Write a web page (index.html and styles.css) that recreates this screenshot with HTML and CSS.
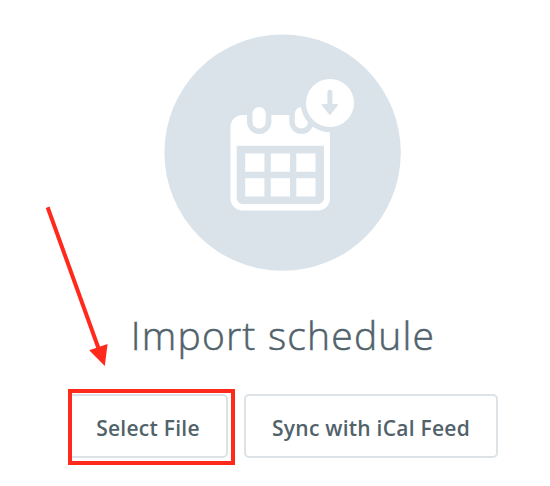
FILE: index.html
```html
<!DOCTYPE html>
<html lang="en">
<head>
  <meta charset="UTF-8">
  <meta name="viewport" content="width=device-width, initial-scale=1.0">
  <title>Import schedule</title>
  <link rel="stylesheet" href="styles.css">
</head>
<body>
  <div class="import">
    <svg class="import-icon" viewBox="0 0 238 238" aria-hidden="true">
      <circle class="tint" cx="118.6" cy="118.6" r="118.2"/>
      <!-- calendar -->
      <rect class="paper" x="66.5" y="81" width="99.5" height="95.5" rx="12"/>
      <path class="tint" d="M72.7 111.8H160V164a6 6 0 0 1-6 6H78.7a6 6 0 0 1-6-6z"/>
      <path class="paper" d="M81.2 119.5h19.2v18.3H81.2zM106.8 119.5H126v18.3h-19.2zM132.3 119.5h19.2v18.3h-19.2zM81.2 144.2h19.2v18.3H81.2zM106.8 144.2H126v18.3h-19.2zM132.3 144.2h19.2v18.3h-19.2z"/>
      <!-- rings -->
      <path class="tint" d="M83 80h24.4v7.8a12.2 12.2 0 0 1-24.4 0zM125.3 80h24.4v7.8a12.2 12.2 0 0 1-24.4 0z"/>
      <rect class="paper" x="88.5" y="73" width="13.2" height="21.5" rx="6.6"/>
      <rect class="paper" x="130.8" y="73" width="13.2" height="21.5" rx="6.6"/>
      <!-- download badge -->
      <circle class="tint" cx="166" cy="69" r="29.3"/>
      <circle class="paper" cx="166" cy="69" r="24"/>
      <path class="tint" d="M163.4 58.2a2.5 2.5 0 0 1 5 0V70h4.4q2.2 0 .8 1.7l-6.7 8.6q-1 1-2 0l-6.7-8.6q-1.4-1.7.8-1.7h4.4z"/>
    </svg>
    <h1>Import schedule</h1>
    <div class="actions">
      <button class="btn btn-file" type="button">Select File</button>
      <button class="btn btn-sync" type="button">Sync with iCal Feed</button>
      <div class="highlight"></div>
    </div>
  </div>
  <svg class="pointer" viewBox="0 0 70 166" aria-hidden="true">
    <path class="pointer-line" d="M7.6 7.2L59.5 151"/>
    <path class="pointer-head" d="M49.2 150.3L67.6 144L64.8 166z"/>
  </svg>
</body>
</html>
```
FILE: styles.css
```css
body {
  margin: 0;
  background-color: #fff;
  color: #51626b;
  font-family: "Open Sans", "Noto Sans", sans-serif;
  overflow: hidden;
}
.import {
  position: relative;
  display: flex;
  flex-direction: column;
  align-items: center;
  box-sizing: border-box;
  height: 486px;
  padding: 34px 0 0 16px;
}
.import-icon {
  display: block;
  width: 238px;
  height: 238px;
}
.tint {
  fill: #dae3ea;
}
.paper {
  fill: #fff;
}
.import h1 {
  margin: 35px 0 32px;
  font-size: 39px;
  font-weight: 300;
  line-height: 55px;
  letter-spacing: 1.2px;
  -webkit-text-stroke: 0.5px #51626b;
  white-space: nowrap;
}
.actions {
  position: relative;
  display: flex;
  gap: 16px;
}
.btn {
  box-sizing: border-box;
  height: 64px;
  padding: 4px 0 0;
  background-color: #fff;
  border: 2px solid #dce2e6;
  border-radius: 5px;
  color: #51626b;
  font-family: inherit;
  font-size: 21px;
  font-weight: 600;
  letter-spacing: 0.25px;
  white-space: nowrap;
}
.btn-file {
  width: 160px;
}
.btn-sync {
  width: 254px;
}
/* red frame over the first button */
.highlight {
  position: absolute;
  top: -5px;
  left: 0;
  box-sizing: border-box;
  width: 167px;
  height: 76px;
  border: 4px solid #ff2a1c;
}
.pointer {
  position: absolute;
  top: 200px;
  left: 40px;
  width: 70px;
  height: 166px;
}
.pointer-line {
  fill: none;
  stroke: #ff2a1c;
  stroke-width: 4;
}
.pointer-head {
  fill: #ff2a1c;
}
```
